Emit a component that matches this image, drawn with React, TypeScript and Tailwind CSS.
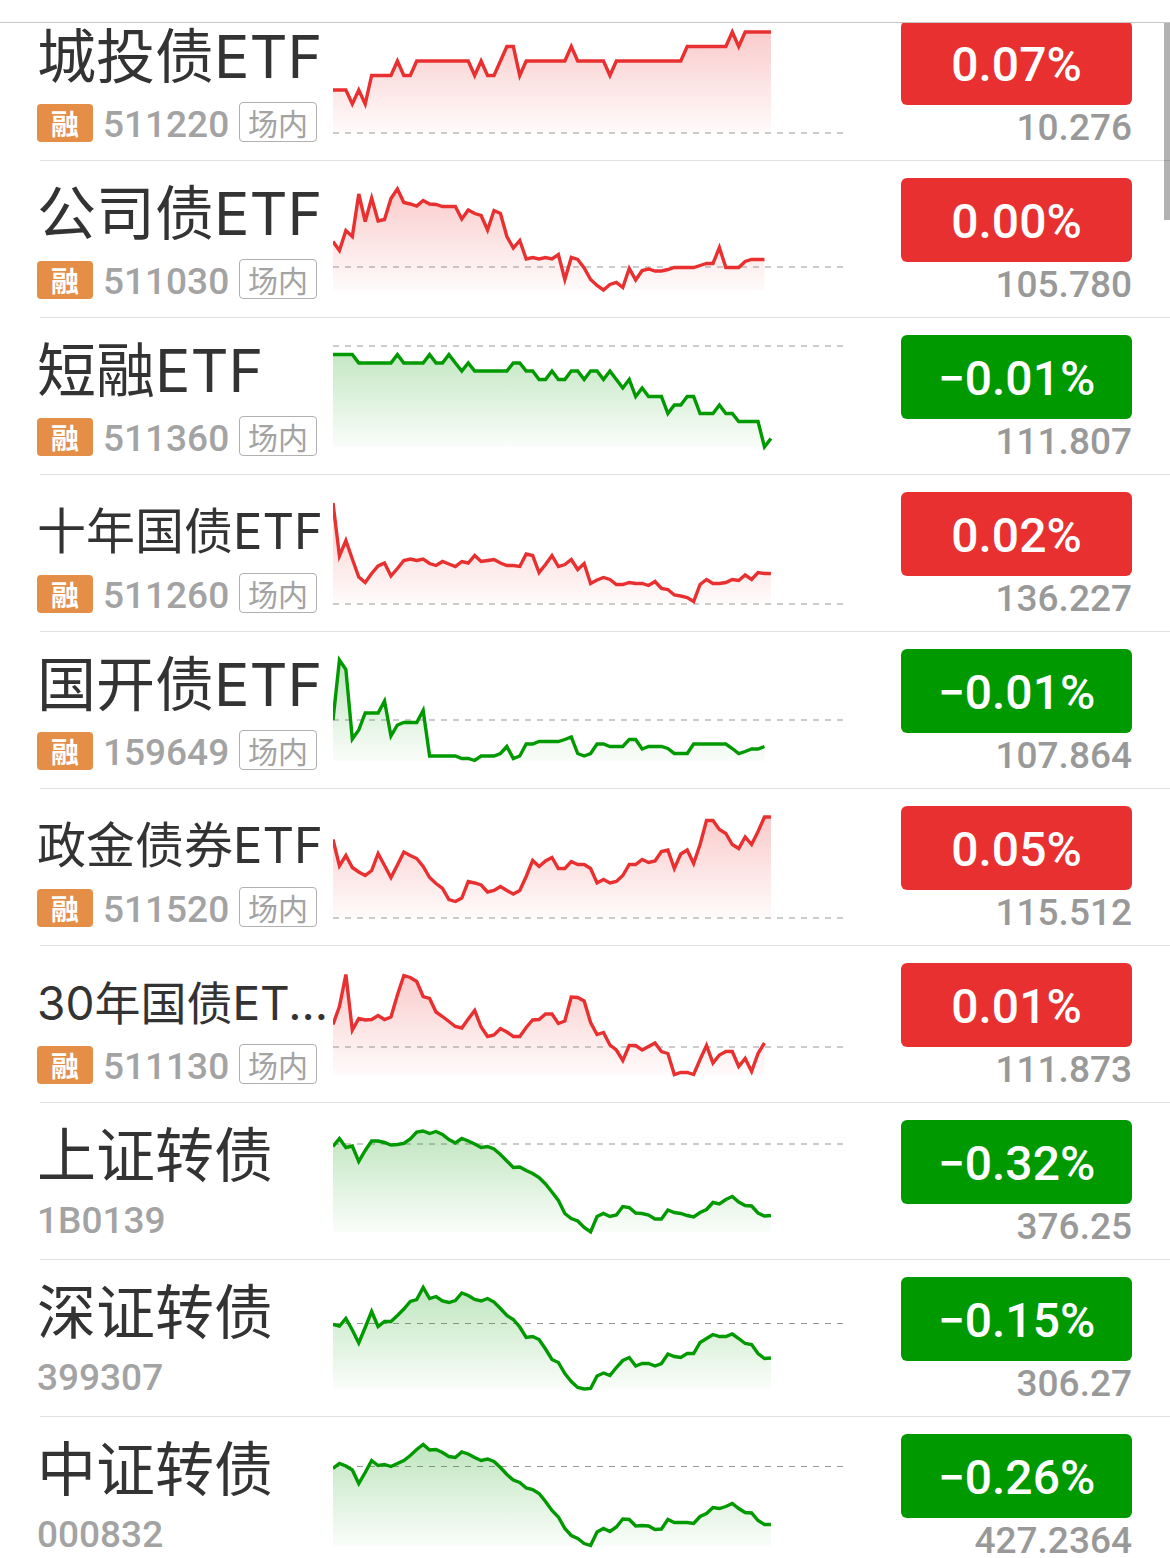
import { useId } from 'react'
import clsx from 'clsx'

type Quote = {
  name: string
  code: string
  tagged?: boolean
  change: string
  price: string
  up: boolean
  size?: 'md' | 'sm'
  base: number
  points: number[]
}

const STEP = 6.44
const CHART_BOTTOM = 129

const quotes: Quote[] = [
  {
    name: '城投债ETF', code: '511220', tagged: true, change: '0.07%', price: '10.276', up: true, base: 129,
    points: [
      86, 86, 86, 100, 86, 100, 71.5, 71.5, 71.5, 71.5, 57, 71.5, 71.5, 57, 57, 57, 57, 57, 57, 57,
      57, 57, 71.5, 57, 71.5, 71.5, 57, 42.5, 42.5, 71.5, 57, 57, 57, 57, 57, 57, 57, 42.5, 57, 57,
      57, 57, 57, 71.5, 57, 57, 57, 57, 57, 57, 57, 57, 57, 57, 57, 42.5, 42.5, 42.5, 42.5, 42.5,
      42.5, 42.5, 28, 42.5, 28, 28, 28, 28, 28,
    ],
  },
  {
    name: '公司债ETF', code: '511030', tagged: true, change: '0.00%', price: '105.780', up: true, base: 106,
    points: [
      80.5, 89.5, 69.5, 75.5, 33, 60.5, 37, 60, 58.5, 37.5, 28, 41.5, 43, 45, 39.5, 43, 43.5, 45.5, 45.5, 45.5,
      58, 49, 52.5, 54.5, 69, 49.5, 52.5, 75.5, 87, 79.5, 98, 96.5, 98, 96.5, 98, 93.5, 118.5, 96.5, 98.5, 107,
      118.5, 124.5, 129, 123.5, 121.5, 126.5, 107.5, 119, 109.5, 108, 110, 110, 108.5, 106.5, 106.5, 106.5, 106.5, 104.5, 102.5, 102.5,
      86.5, 106.5, 106.5, 106.5, 100.5, 98.5, 98.5, 98.5,
    ],
  },
  {
    name: '短融ETF', code: '511360', tagged: true, change: '−0.01%', price: '111.807', up: false, base: 28,
    points: [
      36.5, 36.5, 36.5, 36.5, 45, 45, 45, 45, 45, 45, 36.5, 45, 45, 45, 45, 36.5, 45, 45, 36.5, 45,
      53, 45, 53, 53, 53, 53, 53, 53, 45, 45, 53, 53, 61.5, 61.5, 53, 61.5, 61.5, 53, 53, 61.5,
      53, 53, 61.5, 53, 61.5, 70, 61.5, 78.5, 70, 78.5, 78.5, 78.5, 95.5, 87, 87, 78.5, 78.5, 95.5, 95.5, 95.5,
      87, 95.5, 95.5, 103.5, 103.5, 103.5, 103.5, 129, 120.5,
    ],
  },
  {
    name: '十年国债ETF', code: '511260', tagged: true, change: '0.02%', price: '136.227', up: true, size: 'md', base: 129,
    points: [
      28, 81, 65.5, 84, 102, 107.5, 98.5, 91, 88, 101, 93.5, 85.5, 84, 85.5, 84, 88.5, 90.5, 86.5, 89, 91.5,
      86.5, 88, 80.5, 86.5, 85.5, 84.5, 88, 90.5, 90.5, 91.5, 79, 80.5, 97.5, 89.5, 80.5, 91.5, 89.5, 84.5, 94.5, 88.5,
      108.5, 105, 102.5, 104.5, 109.5, 109.5, 107.5, 108.5, 108.5, 110.5, 106.5, 113.5, 114.5, 120, 121, 122.5, 126.5, 109.5, 104.5, 108.5,
      108.5, 107.5, 104.5, 105.5, 100, 104.5, 97.5, 98.5, 98.5,
    ],
  },
  {
    name: '国开债ETF', code: '159649', tagged: true, change: '−0.01%', price: '107.864', up: false, base: 88,
    points: [
      88, 28, 37.5, 107, 98, 81, 81, 81, 69, 104, 93, 90.5, 90.5, 90.5, 78.5, 124, 124, 124, 124, 124,
      126.5, 126.5, 128.5, 124, 124, 124, 121.5, 114.5, 126.5, 124, 112, 112, 109.5, 109.5, 109.5, 109.5, 107.5, 105, 121.5, 124,
      121.5, 112, 112, 114.5, 114.5, 114.5, 107.5, 107.5, 117, 114.5, 114.5, 114.5, 116.5, 121.5, 121.5, 121.5, 112, 112, 112, 112,
      112, 112, 116.5, 121.5, 119.5, 117, 117, 114.5,
    ],
  },
  {
    name: '政金债券ETF', code: '511520', tagged: true, change: '0.05%', price: '115.512', up: true, size: 'md', base: 129,
    points: [
      50.5, 77, 66.5, 78.5, 83, 86.5, 81.5, 64.5, 76.5, 88.5, 76, 63, 66.5, 69.5, 77.5, 88.5, 94.5, 99.5, 110.5, 112.5,
      109, 92.5, 94, 96, 103, 101.5, 97.5, 101.5, 105, 101.5, 87.5, 71.5, 77.5, 72, 68.5, 79.5, 79.5, 72.5, 75.5, 75.5,
      79.5, 94, 90.5, 94, 92.5, 86.5, 75.5, 75.5, 70.5, 73.5, 72, 62.5, 61, 79.5, 65, 61, 74.5, 55.5, 31.5, 31.5,
      40.5, 44.5, 55.5, 59.5, 48, 55.5, 42.5, 28, 28,
    ],
  },
  {
    name: '30年国债ET...', code: '511130', tagged: true, change: '0.01%', price: '111.873', up: true, size: 'sm', base: 101,
    points: [
      78.5, 60.5, 28.5, 84, 72.5, 74, 73.5, 69.5, 73.5, 71, 49, 29.5, 31.5, 35.5, 50.5, 52.5, 66, 70.5, 75.5, 80.5,
      82, 73, 64.5, 81, 90.5, 89, 82.5, 86, 90.5, 90.5, 81.5, 74, 73.5, 68, 68, 77.5, 75, 51, 51.5, 55,
      76.5, 88.5, 86.5, 99, 104, 114.5, 99.5, 99.5, 104, 100.5, 97, 105.5, 107.5, 128.5, 126.5, 126.5, 128.5, 113.5, 99.5, 117,
      109, 105.5, 105.5, 120.5, 112.5, 125.5, 107.5, 97,
    ],
  },
  {
    name: '上证转债', code: '1B0139', change: '−0.32%', price: '376.25', up: false, base: 41,
    points: [
      43.5, 35.5, 44.5, 43, 58.5, 47.5, 38, 38, 39.5, 42, 41.5, 40.5, 36, 29, 28, 30.5, 28.5, 31.5, 36.5, 40,
      35.5, 38, 41, 44.5, 43.5, 46, 51.5, 58, 64.5, 64, 67.5, 70.5, 74.5, 81, 89, 97.5, 110.5, 115.5, 118, 124.5,
      129, 113.5, 110.5, 113.5, 112, 103.5, 104.5, 110, 110.5, 112, 116, 116, 107, 109.5, 110.5, 112.5, 114, 109.5, 106.5, 99.5,
      101, 96.5, 93.5, 99, 102.5, 103, 110, 113, 112.5,
    ],
  },
  {
    name: '深证转债', code: '399307', change: '−0.15%', price: '306.27', up: false, base: 63.5,
    points: [
      64.5, 66, 58.5, 70, 83, 67.5, 51.5, 66.5, 61.5, 61.5, 55.5, 49, 41.5, 39.5, 27.5, 38.5, 36.5, 41, 42.5, 40.5,
      33, 35.5, 39.5, 41, 38.5, 42, 48.5, 55.5, 59.5, 67, 77.5, 76.5, 79.5, 89, 99.5, 102.5, 113.5, 121.5, 127.5, 129,
      128.5, 116, 113, 115.5, 107.5, 100.5, 97.5, 106, 103.5, 103.5, 106, 103.5, 94, 96.5, 97.5, 93.5, 93.5, 82.5, 78.5, 74.5,
      76.5, 76.5, 74, 78.5, 83.5, 84.5, 93.5, 98.5, 98,
    ],
  },
  {
    name: '中证转债', code: '000832', change: '−0.26%', price: '427.2364', up: false, base: 49.5,
    points: [
      51.5, 46.5, 49, 53, 66.5, 55.5, 43.5, 48.5, 47.5, 49.5, 46.5, 43.5, 38.5, 32.5, 27.5, 33, 32.5, 35.5, 39.5, 40.5,
      35, 37, 40.5, 43.5, 42, 44.5, 50.5, 57.5, 63, 65.5, 71, 72.5, 76.5, 84.5, 93.5, 100, 111.5, 118.5, 121.5, 126.5,
      128.5, 115, 111.5, 114.5, 110, 102, 102.5, 109, 108.5, 109, 112.5, 112, 102.5, 105.5, 105.5, 105.5, 106.5, 99.5, 96.5, 90.5,
      91.5, 89.5, 86.5, 91.5, 95.5, 96, 103.5, 107.5, 107.5,
    ],
  },
]

const nameSizes = {
  lg: 'text-[59px]',
  md: 'text-[49px]',
  sm: 'text-[46px]',
}

function Sparkline({ points, base, up }: Pick<Quote, 'points' | 'base' | 'up'>) {
  const id = useId()
  const color = up ? '#e93030' : '#009900'
  const line = points.map((y, i) => `${(i * STEP).toFixed(2)},${y}`).join(' ')
  const lastX = ((points.length - 1) * STEP).toFixed(2)

  return (
    <svg className="block h-[156px] w-[510px]" viewBox="0 0 510 156" aria-hidden="true">
      <defs>
        <linearGradient id={id} gradientUnits="userSpaceOnUse" x1="0" y1="28" x2="0" y2={CHART_BOTTOM}>
          <stop offset="0" stopColor={color} stopOpacity={0.25} />
          <stop offset="1" stopColor={color} stopOpacity={0.02} />
        </linearGradient>
      </defs>
      <line x1="0" x2="510" y1={base} y2={base} stroke="#999" strokeDasharray="6 6" />
      <polygon points={`0,${CHART_BOTTOM} ${line} ${lastX},${CHART_BOTTOM}`} fill={`url(#${id})`} />
      <polyline points={line} fill="none" stroke={color} strokeWidth={3.4} />
    </svg>
  )
}

function QuoteRow({ quote }: { quote: Quote }) {
  const { name, code, tagged, change, price, up, size = 'lg', base, points } = quote

  return (
    <li>
      <div className="flex h-[156px] pl-[37px] pr-[38px]">
        <div className="w-[296px] shrink-0 whitespace-nowrap pt-[23px]">
          <h2 className="h-[60px] font-['Inter','Noto_Sans_CJK_SC',sans-serif] text-[59px] leading-[60px] text-[#333]">
            <span className={clsx('leading-none', nameSizes[size])}>{name}</span>
          </h2>
          {tagged ? (
            <div className="mt-[15px] flex h-10 items-end gap-[10px]">
              <span className="flex h-[38px] w-14 items-center justify-center rounded-sm bg-[#e58e48] text-[28px] font-bold leading-none text-white">
                融
              </span>
              <span className="w-[126px] font-[Roboto] text-[37px] font-medium leading-[34px] text-[#a3a3a3]">{code}</span>
              <span className="flex h-10 w-[78px] items-center justify-center rounded-sm border border-[#b0b0b0] text-[30px] leading-none text-[#a3a3a3]">
                场内
              </span>
            </div>
          ) : (
            <div className="mt-[15px] font-[Roboto] text-[37px] font-medium leading-10 text-[#a3a3a3]">{code}</div>
          )}
        </div>
        <div className="min-w-0 flex-1 overflow-hidden">
          <Sparkline points={points} base={base} up={up} />
        </div>
        <div className="w-[231px] shrink-0 pt-[17px] text-right font-[Roboto] font-medium">
          <div
            className={clsx(
              'flex h-[84px] items-center justify-center rounded-md pt-1 text-5xl text-white',
              up ? 'bg-[#e93030]' : 'bg-[#009900]',
            )}
          >
            {change}
          </div>
          <div className="text-[37px] leading-[46px] text-[#999]">{price}</div>
        </div>
      </div>
      <div className="ml-10 h-px bg-[#e0e0e0]" />
    </li>
  )
}

export default function App() {
  return (
    <div className="flex h-screen flex-col overflow-hidden bg-white font-['Noto_Sans_CJK_SC',sans-serif]">
      <header className="h-[23px] shrink-0 border-b border-[#c8c8c8]" />
      <main className="relative min-h-0 flex-1 overflow-hidden">
        {/* list is scrolled slightly under the header */}
        <ul className="-mt-[19px]">
          {quotes.map(quote => (
            <QuoteRow key={quote.code} quote={quote} />
          ))}
        </ul>
        <div className="absolute right-0 top-0 h-[197px] w-1.5 bg-black/30" />
      </main>
    </div>
  )
}
